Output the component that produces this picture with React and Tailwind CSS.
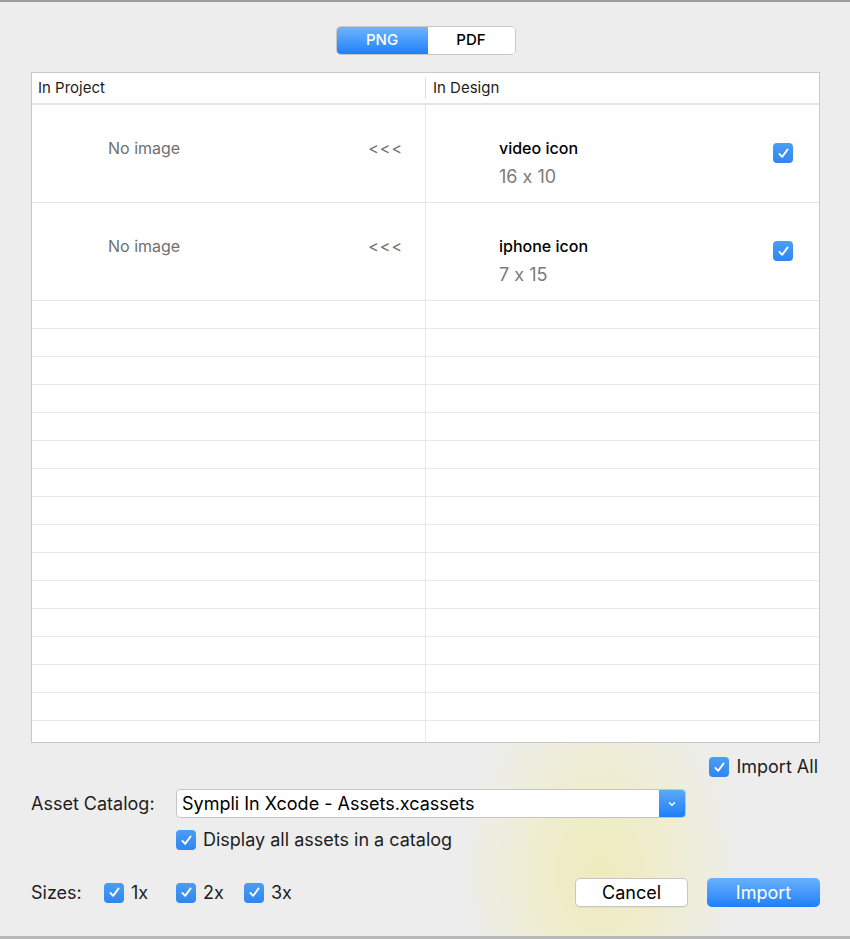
import React from 'react'

const FONT = { fontFamily: 'Inter, "Noto Sans", sans-serif', fontFeatureSettings: '"calt" 0' }

const ASSETS = [
  { name: 'video icon', size: '16 x 10' },
  { name: 'iphone icon', size: '7 x 15' },
]

function Check({ className = '' }) {
  return (
    <span className={`flex size-[20px] shrink-0 items-center justify-center rounded-[4px] bg-gradient-to-b from-[#4a9ef5] to-[#2f86ee] ${className}`}>
      <svg viewBox="0 0 20 20" className="size-[15px]" fill="none" stroke="white" strokeWidth="2.4" strokeLinecap="round" strokeLinejoin="round">
        <path d="M4.5 10.5 L8.2 14.5 L15.5 4.5" />
      </svg>
    </span>
  )
}

function CheckLabel({ label, className = '' }) {
  return (
    <label className={`flex items-center gap-[7px] text-[18px] leading-[20px] text-[#1d1d1d] ${className}`}>
      <Check />
      <span>{label}</span>
    </label>
  )
}

export default function App() {
  return (
    <div
      style={FONT}
      className="relative flex h-[939px] w-[850px] flex-col overflow-hidden border-t-2 border-[#9c9c9c] bg-[#ededed] bg-[radial-gradient(ellipse_140px_190px_at_600px_870px,#eeebbd_0%,#efedcc_40%,#ededed_100%)] pl-[31px] pr-[30px]"
    >
      {/* Format switch */}
      <div className="mt-[24px] flex justify-center">
        <div className="flex h-[29px] overflow-hidden rounded-[5px] border border-[#c8c8c8] text-[15px] font-medium">
          <div className="flex w-[91px] items-center justify-center bg-gradient-to-b from-[#6db4fb] to-[#1a80fb] text-white">PNG</div>
          <div className="flex w-[87px] items-center justify-center bg-white text-black">PDF</div>
        </div>
      </div>

      {/* Table */}
      <div className="mt-[17px] flex h-[671px] flex-col overflow-hidden border border-[#c9c9c9] bg-white">
        <div className="flex h-[32px] shrink-0 border-b-2 border-[#e4e4e4] text-[15px] text-[#1d1d1d]">
          <div className="my-[4px] flex w-[394px] items-center border-r border-[#dedede] pl-[6px]">In Project</div>
          <div className="flex flex-1 items-center pl-[7px]">In Design</div>
        </div>

        {ASSETS.map((a) => (
          <div key={a.name} className="flex h-[98px] shrink-0 border-b border-[#e6e6e6]">
            <div className="flex w-[394px] items-start justify-between border-r border-[#e6e6e6] pl-[76px] pr-[22px] pt-[31px] text-[16px] text-[#707070]">
              <span>No image</span>
              <span className="tracking-[1px]">&lt;&lt;&lt;</span>
            </div>
            <div className="flex flex-1 items-start justify-between pl-[73px] pr-[26px] pt-[33px]">
              <div className="flex flex-col">
                <span className="text-[16px] font-medium leading-[20px] text-black">{a.name}</span>
                <span className="mt-[8px] text-[18px] leading-[22px] text-[#7b7b7b]">{a.size}</span>
              </div>
              <Check className="mt-[5px]" />
            </div>
          </div>
        ))}

        {Array.from({ length: 16 }).map((_, i) => (
          <div key={i} className="flex h-[28px] shrink-0 border-b border-[#e8e8e8]">
            <div className="w-[394px] border-r border-[#e8e8e8]" />
            <div className="flex-1" />
          </div>
        ))}
      </div>

      {/* Import all */}
      <div className="mt-[14px] flex justify-end pr-[2px]">
        <CheckLabel label="Import All" />
      </div>

      {/* Asset catalog */}
      <div className="mt-[12px] flex items-center">
        <span className="w-[145px] text-[18px] leading-[20px] text-[#1d1d1d]">Asset Catalog:</span>
        <div className="flex h-[29px] w-[510px] overflow-hidden rounded-[4px] border border-[#c5c5c5] bg-white">
          <span className="flex flex-1 items-center pl-[5px] text-[18px] text-black">Sympli In Xcode - Assets.xcassets</span>
          <span className="flex w-[26px] items-center justify-center bg-gradient-to-b from-[#5aa8f8] to-[#1b7ff6]">
            <svg viewBox="0 0 10 10" className="size-[10px]" fill="none" stroke="white" strokeWidth="1.6" strokeLinecap="round" strokeLinejoin="round">
              <path d="M2.5 3.8 L5 6.3 L7.5 3.8" />
            </svg>
          </span>
        </div>
      </div>

      <div className="mt-[12px] pl-[145px]">
        <CheckLabel label="Display all assets in a catalog" />
      </div>

      {/* Sizes + actions */}
      <div className="mt-[28px] flex items-center">
        <span className="w-[73px] text-[18px] leading-[20px] text-[#1d1d1d]">Sizes:</span>
        <CheckLabel label="1x" className="w-[72px]" />
        <CheckLabel label="2x" className="w-[68px]" />
        <CheckLabel label="3x" />
        <div className="ml-auto flex gap-[19px]">
          <button className="h-[29px] w-[113px] rounded-[5px] border border-[#c6c6c6] bg-white text-[18px] text-black shadow-[0_1px_0_rgba(0,0,0,0.05)]">Cancel</button>
          <button className="h-[29px] w-[113px] rounded-[5px] bg-gradient-to-b from-[#68b1fb] to-[#1a7ff7] text-[18px] text-white">Import</button>
        </div>
      </div>

      <div className="absolute bottom-0 left-0 right-0 h-[3px] bg-[#b9b9b9]" />
    </div>
  )
}
